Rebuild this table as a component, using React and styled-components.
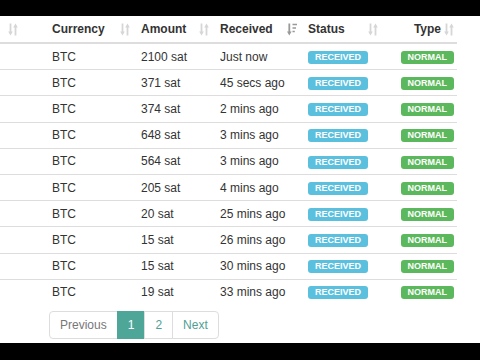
import React from 'react';
import styled, { createGlobalStyle } from 'styled-components';

const GlobalStyle = createGlobalStyle`
  html, body {
    margin: 0;
    padding: 0;
    background: #fff;
  }
  body {
    font-family: "Liberation Sans", Arial, sans-serif;
    color: #333;
  }
`;

const Frame = styled.div`
  width: 480px;
  height: 360px;
  display: flex;
  flex-direction: column;
  overflow: hidden;
`;

const Letterbox = styled.div`
  height: ${p => p.h}px;
  flex: none;
  background: #000;
`;

const Content = styled.div`
  flex: 1;
  display: flex;
  flex-direction: column;
  background: #fff;
`;

const Table = styled.table`
  width: 457px;
  border-collapse: collapse;
  table-layout: fixed;
  font-size: 12px;
`;

const HeadCell = styled.th`
  height: 26px;
  padding: 0 3px 0 8px;
  border-bottom: 2px solid #ddd;
  font-weight: bold;
  text-align: left;
  vertical-align: middle;
  color: #333;
`;

const HeadInner = styled.div`
  display: flex;
  align-items: center;
  justify-content: ${p => (p.right ? 'flex-end' : 'space-between')};
  gap: 3px;
`;

const Row = styled.tr`
  border-top: 1px solid #ddd;
  &:first-child {
    border-top: none;
  }
`;

const Cell = styled.td`
  height: 25.2px;
  padding: ${p => (p.right ? '0 3px 0 8px' : '0 8px')};
  text-align: ${p => (p.right ? 'right' : 'left')};
  vertical-align: middle;
  white-space: nowrap;
  line-height: 14px;
`;

const Badge = styled.span`
  display: inline-block;
  height: 13px;
  line-height: 13px;
  padding: 0 7px;
  border-radius: 3px;
  font-size: 9px;
  font-weight: bold;
  color: #fff;
  vertical-align: middle;
  background: ${p => p.color};
`;

const Pager = styled.ul`
  display: flex;
  list-style: none;
  margin: 6px 0 0 49px;
  padding: 0;
  font-size: 12px;
`;

const PageItem = styled.li`
  height: 26px;
  line-height: 26px;
  padding: 0 10px;
  border: 1px solid ${p => (p.active ? '#4ea699' : '#ddd')};
  margin-left: -1px;
  background: ${p => (p.active ? '#4ea699' : '#fff')};
  color: ${p => (p.active ? '#fff' : p.muted ? '#777' : '#4f9f95')};
  &:first-child {
    margin-left: 0;
    border-radius: 4px 0 0 4px;
  }
  &:last-child {
    border-radius: 0 4px 4px 0;
  }
`;

const SortIcon = ({ active }) =>
  active ? (
    <svg width="10" height="13" viewBox="0 0 10 12" style={{ flex: 'none' }}>
      <path d="M2.3 0v8.5" stroke="#999" strokeWidth="1.8" />
      <path d="M0 8h4.6L2.3 12z" fill="#999" />
      <path d="M5.5 1h4.5M5.5 4.5h3.5M5.5 8h2.3" stroke="#999" strokeWidth="1.6" />
    </svg>
  ) : (
    <svg width="10" height="13" viewBox="0 0 10 12" style={{ flex: 'none' }}>
      <path d="M2.5 0v8.5" stroke="#d6d6d6" strokeWidth="1.8" />
      <path d="M0.2 8h4.6L2.5 12z" fill="#d6d6d6" />
      <path d="M7.5 3.5V12" stroke="#d6d6d6" strokeWidth="1.8" />
      <path d="M5.2 4h4.6L7.5 0z" fill="#d6d6d6" />
    </svg>
  );

const columns = [
  { title: '', width: 44 },
  { title: 'Currency', width: 89 },
  { title: 'Amount', width: 79 },
  { title: 'Received', width: 88, active: true },
  { title: 'Status', width: 81 },
  { title: 'Type', width: 76, right: true }
];

const rows = [
  ['2100 sat', 'Just now'],
  ['371 sat', '45 secs ago'],
  ['374 sat', '2 mins ago'],
  ['648 sat', '3 mins ago'],
  ['564 sat', '3 mins ago'],
  ['205 sat', '4 mins ago'],
  ['20 sat', '25 mins ago'],
  ['15 sat', '26 mins ago'],
  ['15 sat', '30 mins ago'],
  ['19 sat', '33 mins ago']
];

export default function App() {
  return (
    <Frame>
      <GlobalStyle />
      <Letterbox h={16} />
      <Content>
        <Table>
          <colgroup>
            {columns.map((c, i) => (
              <col key={i} style={{ width: c.width }} />
            ))}
          </colgroup>
          <thead>
            <tr>
              {columns.map((c, i) => (
                <HeadCell key={i}>
                  <HeadInner right={c.right}>
                    {c.title && <span>{c.title}</span>}
                    <SortIcon active={c.active} />
                  </HeadInner>
                </HeadCell>
              ))}
            </tr>
          </thead>
          <tbody>
            {rows.map(([amount, received], i) => (
              <Row key={i}>
                <Cell />
                <Cell>BTC</Cell>
                <Cell>{amount}</Cell>
                <Cell>{received}</Cell>
                <Cell>
                  <Badge color="#5bc0de">RECEIVED</Badge>
                </Cell>
                <Cell right>
                  <Badge color="#5cb85c">NORMAL</Badge>
                </Cell>
              </Row>
            ))}
          </tbody>
        </Table>
        <Pager>
          <PageItem muted>Previous</PageItem>
          <PageItem active>1</PageItem>
          <PageItem>2</PageItem>
          <PageItem>Next</PageItem>
        </Pager>
      </Content>
      <Letterbox h={17} />
    </Frame>
  );
}
